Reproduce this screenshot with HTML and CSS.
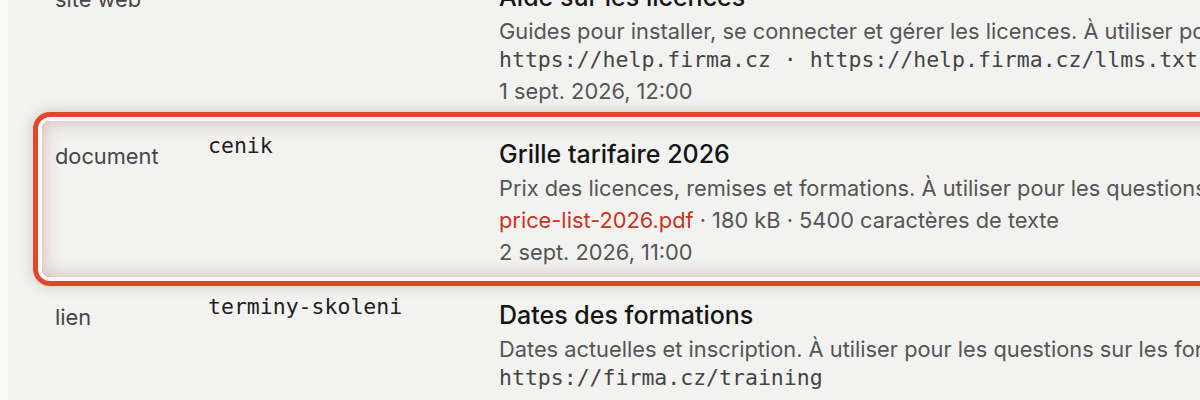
FILE: index.html
```html
<!DOCTYPE html>
<html lang="fr">
<head>
<meta charset="utf-8">
<title>Sources</title>
<link rel="stylesheet" href="styles.css">
</head>
<body>
<div class="panel">
  <div class="rows">
    <div class="row">
      <div class="type">site web</div>
      <div class="code">aide-licence</div>
      <div class="main">
        <div class="title">Aide sur les licences</div>
        <div class="desc">Guides pour installer, se connecter et gérer les licences. À utiliser pour les questions sur les licences.</div>
        <div class="mono">https://help.firma.cz · https://help.firma.cz/llms.txt</div>
        <div class="date">1 sept. 2026, 12:00</div>
      </div>
    </div>
    <div class="row row-active">
      <div class="type">document</div>
      <div class="code">cenik</div>
      <div class="main">
        <div class="title">Grille tarifaire 2026</div>
        <div class="desc">Prix des licences, remises et formations. À utiliser pour les questions sur les prix.</div>
        <div class="meta"><span class="file">price-list-2026.pdf</span> · 180 kB · 5400 caractères de texte</div>
        <div class="date">2 sept. 2026, 11:00</div>
      </div>
    </div>
    <div class="row">
      <div class="type">lien</div>
      <div class="code">terminy-skoleni</div>
      <div class="main">
        <div class="title">Dates des formations</div>
        <div class="desc">Dates actuelles et inscription. À utiliser pour les questions sur les formations.</div>
        <div class="mono">https://firma.cz/training</div>
        <div class="date">3 sept. 2026, 09:00</div>
      </div>
    </div>
  </div>
</div>
</body>
</html>
```
FILE: styles.css
```css
html, body {
  margin: 0;
  padding: 0;
  height: 100%;
  overflow: hidden;
}
body {
  background: #f9f9f8;
  font-family: Inter, "Noto Sans", sans-serif;
  color: #222;
}
.panel {
  margin-left: 8px;
  height: 100%;
  background: #f2f2f0;
  overflow: hidden;
}
.rows {
  margin-top: -36px;
  padding-left: 34px;
  display: flex;
  flex-direction: column;
  gap: 5px;
}
.row {
  display: grid;
  grid-template-columns: 153px 291px 1fr;
  padding: 15px 0 9px 13px;
  width: 1400px;
  border-radius: 8px;
}
.row-active {
  box-shadow:
    inset 0 0 16px 3px rgba(150, 80, 70, 0.28),
    0 0 0 4px #fffaf8,
    0 0 0 9px #e0482b,
    0 0 12px 10px rgba(120, 90, 80, 0.25);
}
.type {
  font-size: 21.8px;
  line-height: 32px;
  color: #454545;
  padding-top: 4px;
}
.code {
  font-family: "DejaVu Sans Mono", monospace;
  font-size: 21.5px;
  line-height: 28px;
  color: #1e1e1e;
  margin-top: -4px;
}
.main {
  white-space: nowrap;
}
.title {
  font-size: 25px;
  line-height: 36px;
  font-weight: 500;
  color: #151515;
}
.desc, .meta, .date {
  font-size: 21.8px;
  line-height: 32px;
  color: #555;
}
.mono {
  font-family: "DejaVu Sans Mono", monospace;
  font-size: 21.5px;
  line-height: 26px;
  color: #444;
  padding-bottom: 2px;
}
.file {
  color: #c9341c;
}
```
